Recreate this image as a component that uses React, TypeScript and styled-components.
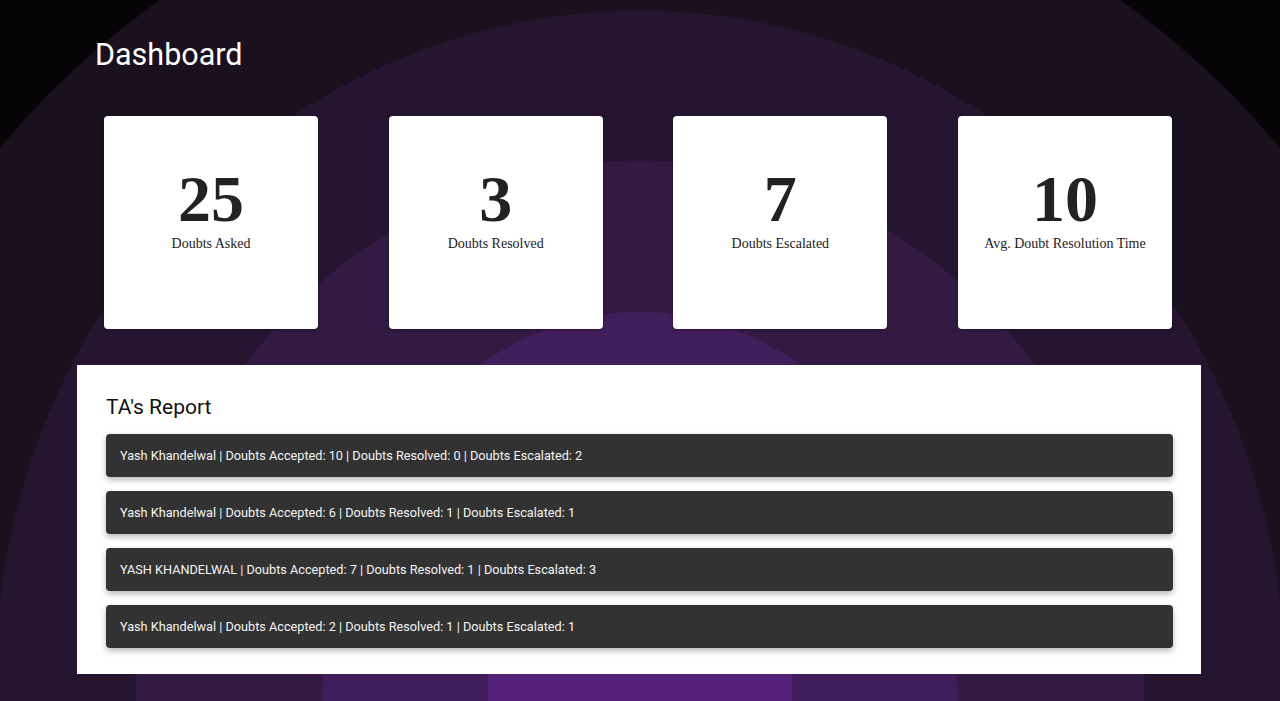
import React from "react";
import styled, { createGlobalStyle } from "styled-components";

const GlobalStyle = createGlobalStyle`
  html, body {
    margin: 0;
    padding: 0;
    background: #060407;
  }
  * { box-sizing: border-box; }
`;

const layer = (rx: number, ry: number, cy: number, color: string) =>
  `radial-gradient(${rx}px ${ry}px at 640px ${cy}px, ${color} calc(100% - 1.5px), transparent 100%)`;

const Page = styled.div`
  width: 1280px;
  height: 701px;
  overflow: hidden;
  padding-top: 37px;
  font-family: Roboto, "Noto Sans", sans-serif;
  background:
    ${layer(153, 260, 701, "#54227a")},
    ${layer(318, 390, 701, "#421d5c")},
    ${layer(505, 541, 701, "#331a43")},
    ${layer(645, 670, 680, "#261530")},
    ${layer(833, 833, 680, "#1a101e")},
    #060407;
`;

const Main = styled.main`
  width: 1124px;
  margin-left: 77px;
  display: flex;
  flex-direction: column;
`;

const Title = styled.h1`
  margin: 0 0 0 18px;
  font-size: 30.5px;
  font-weight: 400;
  line-height: normal;
  color: #ffffff;
`;

const StatsRow = styled.section`
  width: 1068px;
  margin: 44px 0 0 27px;
  display: flex;
  justify-content: space-between;
`;

const StatCard = styled.div`
  width: 214px;
  height: 213px;
  background: #ffffff;
  border-radius: 4px;
  box-shadow: 0 1px 3px rgba(0, 0, 0, 0.35);
  padding-top: 50px;
  display: flex;
  flex-direction: column;
  align-items: center;
  font-family: "Liberation Serif", "Times New Roman", serif;
  color: #222222;
`;

const StatValue = styled.div`
  font-size: 66px;
  line-height: 66px;
  font-weight: 700;
`;

const StatLabel = styled.div`
  margin-top: 4px;
  font-size: 14px;
  line-height: 16px;
`;

const ReportPanel = styled.section`
  margin-top: 36px;
  background: #ffffff;
  padding: 30px 28px 26px 29px;
  display: flex;
  flex-direction: column;
`;

const ReportTitle = styled.h2`
  margin: 0 0 15px 0;
  font-size: 21px;
  font-weight: 400;
  line-height: normal;
  color: #111111;
`;

const ReportList = styled.div`
  display: flex;
  flex-direction: column;
  gap: 14px;
`;

const ReportRow = styled.div`
  height: 43px;
  padding: 0 14px;
  display: flex;
  align-items: center;
  background: #323232;
  border-radius: 4px;
  box-shadow: 0 3px 6px rgba(0, 0, 0, 0.28);
  color: #f4f4f4;
  font-size: 12.7px;
  line-height: normal;
`;

const stats = [
  { value: "25", label: "Doubts Asked" },
  { value: "3", label: "Doubts Resolved" },
  { value: "7", label: "Doubts Escalated" },
  { value: "10", label: "Avg. Doubt Resolution Time" },
];

const reports = [
  { name: "Yash Khandelwal", accepted: 10, resolved: 0, escalated: 2 },
  { name: "Yash Khandelwal", accepted: 6, resolved: 1, escalated: 1 },
  { name: "YASH KHANDELWAL", accepted: 7, resolved: 1, escalated: 3 },
  { name: "Yash Khandelwal", accepted: 2, resolved: 1, escalated: 1 },
];

export default function App() {
  return (
    <>
      <GlobalStyle />
      <Page>
        <Main>
          <Title>Dashboard</Title>
          <StatsRow>
            {stats.map((s) => (
              <StatCard key={s.label}>
                <StatValue>{s.value}</StatValue>
                <StatLabel>{s.label}</StatLabel>
              </StatCard>
            ))}
          </StatsRow>
          <ReportPanel>
            <ReportTitle>TA's Report</ReportTitle>
            <ReportList>
              {reports.map((r, i) => (
                <ReportRow key={i}>
                  {r.name} | Doubts Accepted: {r.accepted} | Doubts Resolved: {r.resolved} | Doubts Escalated: {r.escalated}
                </ReportRow>
              ))}
            </ReportList>
          </ReportPanel>
        </Main>
      </Page>
    </>
  );
}
